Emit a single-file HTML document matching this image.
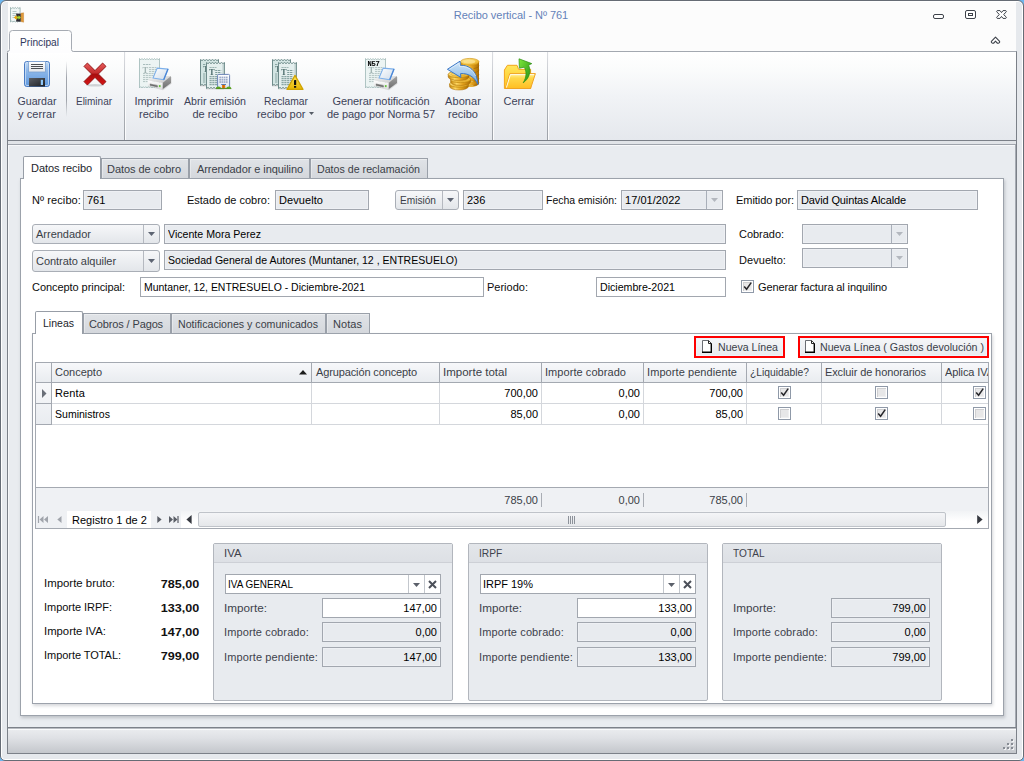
<!DOCTYPE html>
<html lang="es"><head><meta charset="utf-8"><title>Recibo vertical - Nº 761</title>
<style>
html,body{margin:0;padding:0}
body{width:1024px;height:761px;overflow:hidden;background:#6db6ef;position:relative;font-family:"Liberation Sans", sans-serif;font-size:11px;line-height:14px}
div{position:absolute;box-sizing:border-box}
svg{position:absolute;overflow:visible}
.t{position:absolute;white-space:nowrap;font-size:11px;line-height:14px}

.f{border:1px solid #a2a7af;background:#e8ebef;box-shadow:inset 0 0 0 1px #eef0f4}
.fw{border:1px solid #a2a7af;background:#fff}
.btn{border:1px solid #a9aeb6;border-radius:3px;background:linear-gradient(#f6f7f9,#e3e6ea)}
.tabi{border:1px solid #9aa0a9;border-bottom:none;background:linear-gradient(#e0e3e7,#d4d7dc);box-shadow:inset 1px 1px 0 rgba(255,255,255,.35)}
.taba{border:1px solid #979da6;border-bottom:none;background:#fff}
.page{border:1px solid #9ca2ab;background:#fff}
.gb{border:1px solid #b2b6bd;border-radius:2px;background:#e8ebef}
.gbh{background:linear-gradient(#e3e6ea,#dde0e5);border-bottom:1px solid #cdd0d6}
.cb{border:1px solid #8f99a8;background:#fff}
.cb i{position:absolute;left:1px;top:1px;width:9px;height:9px;background:#e7e7e8;box-shadow:inset 1px 1px 0 #cfcfd1,inset -1px -1px 0 #efeff0}
</style></head>
<body>
<div style="left:0px;top:0px;width:1024px;height:761px;border:1px solid #666c75;border-radius:6px 6px 5px 5px;background:#e6e9ed;box-shadow:inset 0 0 0 1px #fff"></div><div style="left:8px;top:2px;width:1008px;height:49px;background:#fcfcfc"></div><svg style="left:10px;top:7px" width="14" height="16"><path d="M.5 .5l1.2 1 1.2-1 1.2 1 1.2-1 1.2 1 1.2-1 1.2 1 1.2-1V15l-1.2-.9-1.2.9-1.2-.9-1.2.9-1.2-.9-1.2.9-1.2-.9-1.2.9Z" fill="#eef5f4" stroke="#8ea8a7" stroke-width=".8"/><path d="M2.5 4.5h4M2.5 6.5h5M2.5 8.5h4M2.5 10.5h3" stroke="#a9bfbe" stroke-width=".9"/><rect x="6.2" y="6.6" width="4.6" height="8" fill="#2e2a33"/><path d="M11 6.2l2.6-.4v9.4L11 14.6Z" fill="#e09a3c" stroke="#b87420" stroke-width=".4"/><path d="M4 10.5l2.6-2.3v1.4h2v-1.4l2.4 2.3-2.4 2.3v-1.4h-2v1.4Z" fill="#a4d82c"/><path d="M4 10.5l2.6-2.3v4.6Z" fill="#f59a10"/></svg><span class="t" style="top:8px;color:#6482b9;letter-spacing:-0.037px;left:361px;width:300px;text-align:center;">Recibo vertical - Nº 761</span><svg style="left:933px;top:14px" width="11" height="5"><rect x=".5" y=".5" width="10" height="4" rx="1.5" fill="#fff" stroke="#3d424a"/></svg><svg style="left:965px;top:10px" width="11" height="9"><rect x=".5" y=".5" width="10" height="8" rx="1.5" fill="#fff" stroke="#3d424a"/><rect x="3.5" y="3.5" width="4" height="2" fill="none" stroke="#3d424a"/></svg><svg style="left:996px;top:10px" width="11" height="9"><path d="M1.2 .6H4L5.5 2.6 7 .6H9.8Q10.9 1.2 10 2.2L7.6 4.5 10 6.8Q10.9 7.8 9.8 8.4H7L5.5 6.4 4 8.4H1.2Q.1 7.8 1 6.8L3.4 4.5 1 2.2Q.1 1.2 1.2 .6Z" fill="#fff" stroke="#3d424a" stroke-linejoin="round"/></svg><svg style="left:990px;top:36px" width="11" height="9"><path d="M5.5 1.2L9.6 5.4Q10 6.8 8.4 7.2 7.4 7.4 6.8 6.6L5.5 5.2 4.2 6.6Q3.6 7.4 2.6 7.2 1 6.8 1.4 5.4Z" fill="#fff" stroke="#3d424a" stroke-width="1.1" stroke-linejoin="round"/></svg><div style="left:7px;top:51px;width:1010px;height:703px;border:1px solid #7b8088;border-top-color:#a3a8b0;background:#e9ecf0"></div><div style="left:8px;top:52px;width:1008px;height:88px;background:linear-gradient(#ffffff,#fbfcfc 18%,#f1f3f6 50%,#e5e8ed)"></div><div style="left:8px;top:140px;width:1008px;height:1px;background:#7b8088"></div><div style="left:8px;top:141px;width:1008px;height:3px;background:#e1e4e8"></div><div style="left:8px;top:144px;width:1008px;height:1px;background:#a0a5ad"></div><div style="left:8px;top:145px;width:1008px;height:1px;background:#f7f8fa"></div><div style="left:8px;top:145px;width:1px;height:582px;background:#f7f8fa"></div><div style="left:1015px;top:145px;width:1px;height:582px;background:#a6abb3"></div><svg style="left:6px;top:30px" width="70" height="23"><defs><linearGradient id="ptab" x1="0" y1="0" x2="0" y2="1"><stop offset="0" stop-color="#fefefe"/><stop offset="1" stop-color="#fdfdfe"/></linearGradient></defs><path d="M1.5 21.5Q3.5 21.5 3.5 19.5V3.5Q3.5 .5 6.5 .5H62.5Q65.5 .5 65.5 3.5V19.5Q65.5 21.5 67.5 21.5V23H1.5Z" fill="url(#ptab)"/><path d="M1.5 21.5Q3.5 21.5 3.5 19.5V3.5Q3.5 .5 6.5 .5H62.5Q65.5 .5 65.5 3.5V19.5Q65.5 21.5 67.5 21.5" fill="none" stroke="#a6abb3"/></svg><span class="t" style="top:35px;color:#30375c;transform:scaleX(0.9244);transform-origin:0 0;left:20px;">Principal</span><div style="left:124px;top:52px;width:1px;height:88px;background:linear-gradient(#dcdee2,#b4b8be 50%,#9da1a8)"></div><div style="left:125px;top:52px;width:1px;height:88px;background:#fbfbfc"></div><div style="left:492px;top:52px;width:1px;height:88px;background:linear-gradient(#dcdee2,#b4b8be 50%,#9da1a8)"></div><div style="left:493px;top:52px;width:1px;height:88px;background:#fbfbfc"></div><div style="left:547px;top:52px;width:1px;height:88px;background:linear-gradient(#dcdee2,#b4b8be 50%,#9da1a8)"></div><div style="left:548px;top:52px;width:1px;height:88px;background:#fbfbfc"></div><div style="left:66px;top:61px;width:1px;height:56px;background:linear-gradient(rgba(160,164,171,0),#a0a4ab 30%,#a0a4ab 70%,rgba(160,164,171,0))"></div><span class="t" style="top:94px;color:#3c4258;transform:scaleX(0.9663);transform-origin:50% 0;left:-113px;width:300px;text-align:center;">Guardar</span><span class="t" style="top:107px;color:#3c4258;letter-spacing:0.090px;left:-113px;width:300px;text-align:center;">y cerrar</span><span class="t" style="top:94px;color:#3c4258;transform:scaleX(0.9060);transform-origin:50% 0;left:-56px;width:300px;text-align:center;">Eliminar</span><span class="t" style="top:94px;color:#3c4258;letter-spacing:-0.090px;left:4px;width:300px;text-align:center;">Imprimir</span><span class="t" style="top:107px;color:#3c4258;letter-spacing:0.005px;left:4px;width:300px;text-align:center;">recibo</span><span class="t" style="top:94px;color:#3c4258;transform:scaleX(0.9659);transform-origin:50% 0;left:65px;width:300px;text-align:center;">Abrir emisión</span><span class="t" style="top:107px;color:#3c4258;letter-spacing:-0.030px;left:65px;width:300px;text-align:center;">de recibo</span><span class="t" style="top:94px;color:#3c4258;transform:scaleX(0.9346);transform-origin:50% 0;left:136px;width:300px;text-align:center;">Reclamar</span><span class="t" style="top:107px;color:#3c4258;letter-spacing:-0.062px;left:257px;">recibo por</span><span class="t" style="top:94px;color:#3c4258;letter-spacing:-0.073px;left:231px;width:300px;text-align:center;">Generar notificación</span><span class="t" style="top:107px;color:#3c4258;letter-spacing:-0.104px;left:231px;width:300px;text-align:center;">de pago por Norma 57</span><span class="t" style="top:94px;color:#3c4258;letter-spacing:0.086px;left:313px;width:300px;text-align:center;">Abonar</span><span class="t" style="top:107px;color:#3c4258;letter-spacing:0.005px;left:313px;width:300px;text-align:center;">recibo</span><span class="t" style="top:94px;color:#3c4258;letter-spacing:-0.029px;left:369px;width:300px;text-align:center;">Cerrar</span><svg style="left:24px;top:61px;will-change:transform" width="26" height="26" viewBox="0 0 26 26"><defs><linearGradient id="svb" x1="0" y1="0" x2="0" y2="1"><stop offset="0" stop-color="#c3dbf5"/><stop offset=".35" stop-color="#8fb9ea"/><stop offset="1" stop-color="#5e97dc"/></linearGradient><linearGradient id="svl" x1="0" y1="0" x2="0" y2="1"><stop offset="0" stop-color="#ffffff"/><stop offset="1" stop-color="#e3e6ea"/></linearGradient><linearGradient id="svs" x1="0" y1="0" x2="1" y2="1"><stop offset="0" stop-color="#5b5f66"/><stop offset="1" stop-color="#1d1f22"/></linearGradient></defs><rect x=".5" y=".5" width="25" height="25" rx="2.2" fill="url(#svb)" stroke="#4a7cc4"/><rect x="1.5" y="1.5" width="23" height="23" rx="1.4" fill="none" stroke="#d4e6f8" stroke-opacity=".7"/><rect x="4.5" y=".5" width="17" height="10.5" fill="url(#svl)" stroke="#7ba0d0" stroke-width=".8"/><path d="M7 3.5h12M7 5.5h12M7 7.5h12" stroke="#3b3e44" stroke-width=".9"/><rect x="5" y="17" width="16" height="8.5" fill="url(#svs)"/><rect x="16.8" y="18.8" width="2.2" height="5.2" fill="#8ec6f7"/></svg><svg style="left:84px;top:63px;will-change:transform" width="22" height="24" viewBox="0 0 22 24"><defs><linearGradient id="dlg" x1="0" y1="0" x2="0" y2="1"><stop offset="0" stop-color="#e85a5a"/><stop offset=".46" stop-color="#c22e2e"/><stop offset=".5" stop-color="#a60f0f"/><stop offset="1" stop-color="#d81313"/></linearGradient></defs><ellipse cx="11" cy="22.3" rx="9" ry="1.2" fill="#8a8e96" opacity=".35"/><path d="M3.4 0L11 7.6L18.6 0L22 3.4L14.4 11L22 18.6L18.6 22L11 14.4L3.4 22L0 18.6L7.6 11L0 3.4Z" fill="url(#dlg)" stroke="#8c1010" stroke-width=".9" stroke-linejoin="round"/></svg><svg style="left:130px;top:54px;will-change:transform" width="48" height="40" viewBox="0 0 48 40"><defs><linearGradient id="pat" x1="0" y1="0" x2="1" y2="1"><stop offset="0" stop-color="#f6f6f6"/><stop offset="1" stop-color="#c6c6c6"/></linearGradient><linearGradient id="paf" x1="0" y1="0" x2="0" y2="1"><stop offset="0" stop-color="#ffffff"/><stop offset="1" stop-color="#dcdcdc"/></linearGradient><linearGradient id="pas" x1="0" y1="0" x2="0" y2="1"><stop offset="0" stop-color="#a4a4a4"/><stop offset="1" stop-color="#6c6c6c"/></linearGradient><linearGradient id="pap" x1="0" y1="0" x2="1" y2="1"><stop offset="0" stop-color="#ffffff"/><stop offset="1" stop-color="#cfdcea"/></linearGradient></defs><path d="M9.5 4.5L10.75 5.90L12.00 4.50L13.25 5.90L14.50 4.50L15.75 5.90L17.00 4.50L18.25 5.90L19.50 4.50L20.75 5.90L22.00 4.50L23.25 5.90L24.50 4.50L25.75 5.90L27.00 4.50L28.25 5.90L29.50 4.50L29.5 34.0L28.25 32.60L27.00 34.00L25.75 32.60L24.50 34.00L23.25 32.60L22.00 34.00L20.75 32.60L19.50 34.00L18.25 32.60L17.00 34.00L15.75 32.60L14.50 34.00L13.25 32.60L12.00 34.00L10.75 32.60L9.50 34.00Z" fill="#ecf4f3" stroke="#a3bab9" stroke-width="0.85" stroke-linejoin="round"/><path d="M13 10.5h7.5" stroke="#a9bdbc" stroke-width="1" stroke-dasharray="2.2 0.6" opacity="1"/><text x="12.4" y="18.6" font-family="Liberation Serif, serif" font-weight="bold" font-size="8.6" fill="#a3b5b4">T</text><path d="M19 13.6h7.5" stroke="#b2c4c3" stroke-width="1" stroke-dasharray="2.2 0.6" opacity="1"/><path d="M19 15.6h7.5" stroke="#b2c4c3" stroke-width="1" stroke-dasharray="2.2 0.6" opacity="1"/><path d="M19 17.6h7.5" stroke="#b2c4c3" stroke-width="1" stroke-dasharray="2.2 0.6" opacity="1"/><path d="M13 19.6h12" stroke="#b2c4c3" stroke-width="1" stroke-dasharray="2.2 0.6" opacity="1"/><path d="M13 21.6h12" stroke="#b2c4c3" stroke-width="1" stroke-dasharray="2.2 0.6" opacity="1"/><path d="M13 23.6h12" stroke="#b2c4c3" stroke-width="1" stroke-dasharray="2.2 0.6" opacity="1"/><path d="M13 25.6h12" stroke="#b2c4c3" stroke-width="1" stroke-dasharray="2.2 0.6" opacity="1"/><path d="M13 27.6h12" stroke="#b2c4c3" stroke-width="1" stroke-dasharray="2.2 0.6" opacity="1"/><path d="M17.5 26.3L23.5 22.3 41 22 41 28.9 32.5 35.3 17.9 31.6Z" fill="#777" opacity=".22" transform="translate(.5 .9)"/><path d="M17.5 26.3L23.5 22.3 41 22 32.5 28.9Z" fill="url(#pat)"/><path d="M32.5 28.9L41 22 41 28.9 32.5 35.3Z" fill="url(#pas)"/><path d="M17.5 26.3L32.5 28.9 32.5 35.3 17.9 31.6Z" fill="url(#paf)"/><path d="M19.9 29.4L27.6 31 27.6 33.6 19.9 31.8Z" fill="#9a9a9a"/><path d="M19.9 30.7L27.6 32.4" stroke="#5a5a5a" stroke-width=".8"/><rect x="28.9" y="31.1" width="1.7" height="2" fill="#66c43e"/><path d="M27.2 14.1L38 15.1 33.7 25.7 23 24Z" fill="url(#pap)" stroke="#7db0ea" stroke-width="1.1" stroke-linejoin="round"/><path d="M38 15.1L33.7 25.7" stroke="#4a86d6" stroke-width="1.3"/></svg><svg style="left:192px;top:54px;will-change:transform" width="48" height="40" viewBox="0 0 48 40"><defs><linearGradient id="bld" x1="0" y1="0" x2="0" y2="1"><stop offset="0" stop-color="#ffffff"/><stop offset="1" stop-color="#d9e4f6"/></linearGradient></defs><path d="M8.5 5.5L10.00 6.60L11.50 5.50L13.00 6.60L14.50 5.50L16.00 6.60L17.50 5.50L19.00 6.60L20.50 5.50L22.00 6.60L23.50 5.50L25.00 6.60L26.50 5.50L26.5 31.5L25.00 30.40L23.50 31.50L22.00 30.40L20.50 31.50L19.00 30.40L17.50 31.50L16.00 30.40L14.50 31.50L13.00 30.40L11.50 31.50L10.00 30.40L8.50 31.50Z" fill="#d3e5e3" stroke="#6f8c8b" stroke-width="1" stroke-linejoin="round"/><text x="11" y="17.5" font-family="Liberation Serif, serif" font-weight="bold" font-size="8" fill="#5f7c7b">T</text><path d="M11 10.5h6" stroke="#8aa6a4" stroke-width="1" stroke-dasharray="2.2 0.6" opacity="1"/><path d="M11 20h6" stroke="#8aa6a4" stroke-width="1" stroke-dasharray="2.2 0.6" opacity="1"/><path d="M11 22h6" stroke="#8aa6a4" stroke-width="1" stroke-dasharray="2.2 0.6" opacity="1"/><path d="M11 24h6" stroke="#8aa6a4" stroke-width="1" stroke-dasharray="2.2 0.6" opacity="1"/><path d="M11 26h6" stroke="#8aa6a4" stroke-width="1" stroke-dasharray="2.2 0.6" opacity="1"/><path d="M11 28h6" stroke="#8aa6a4" stroke-width="1" stroke-dasharray="2.2 0.6" opacity="1"/><path d="M14 34.8h18" stroke="#777" stroke-width="1" opacity=".35"/><path d="M8 31.8h7" stroke="#777" stroke-width="1" opacity=".35"/><path d="M14.5 8.5L16.00 9.60L17.50 8.50L19.00 9.60L20.50 8.50L22.00 9.60L23.50 8.50L25.00 9.60L26.50 8.50L28.00 9.60L29.50 8.50L31.00 9.60L32.50 8.50L32.5 34.5L31.00 33.40L29.50 34.50L28.00 33.40L26.50 34.50L25.00 33.40L23.50 34.50L22.00 33.40L20.50 34.50L19.00 33.40L17.50 34.50L16.00 33.40L14.50 34.50Z" fill="#e4efee" stroke="#6f8c8b" stroke-width="1" stroke-linejoin="round"/><rect x="30.5" y="10" width="2" height="24" fill="#9fb5b4" opacity=".55"/><path d="M17.5 13.5h7" stroke="#9db6b4" stroke-width="1" stroke-dasharray="2.2 0.6" opacity="1"/><text x="17" y="21.4" font-family="Liberation Serif, serif" font-weight="bold" font-size="8.5" fill="#4f6f6e">T</text><path d="M23.2 16.5h6" stroke="#7f9e9c" stroke-width="1.2" stroke-dasharray="2.2 0.6" opacity="1"/><path d="M23.2 18.5h6" stroke="#7f9e9c" stroke-width="1.2" stroke-dasharray="2.2 0.6" opacity="1"/><path d="M23.2 20.5h6" stroke="#7f9e9c" stroke-width="1.2" stroke-dasharray="2.2 0.6" opacity="1"/><path d="M17.5 22.6h11.5" stroke="#8aa6a4" stroke-width="1.2" stroke-dasharray="2.2 0.6" opacity="1"/><path d="M17.5 24.6h11.5" stroke="#8aa6a4" stroke-width="1.2" stroke-dasharray="2.2 0.6" opacity="1"/><path d="M17.5 26.6h11.5" stroke="#8aa6a4" stroke-width="1.2" stroke-dasharray="2.2 0.6" opacity="1"/><path d="M17.5 28.6h11.5" stroke="#8aa6a4" stroke-width="1.2" stroke-dasharray="2.2 0.6" opacity="1"/><path d="M17.5 30.6h11.5" stroke="#8aa6a4" stroke-width="1.2" stroke-dasharray="2.2 0.6" opacity="1"/><rect x="25.6" y="20.4" width="12" height="14" rx="1" fill="url(#bld)" stroke="#6c84b8" stroke-width="1"/><rect x="27.3" y="22.6" width="1.7" height="1.7" fill="#9eabc9"/><rect x="29.5" y="22.6" width="1.7" height="1.7" fill="#9eabc9"/><rect x="31.700000000000003" y="22.6" width="1.7" height="1.7" fill="#9eabc9"/><rect x="33.9" y="22.6" width="1.7" height="1.7" fill="#9eabc9"/><rect x="27.3" y="24.900000000000002" width="1.7" height="1.7" fill="#9eabc9"/><rect x="29.5" y="24.900000000000002" width="1.7" height="1.7" fill="#9eabc9"/><rect x="31.700000000000003" y="24.900000000000002" width="1.7" height="1.7" fill="#9eabc9"/><rect x="33.9" y="24.900000000000002" width="1.7" height="1.7" fill="#9eabc9"/><rect x="27.3" y="27.200000000000003" width="1.7" height="1.7" fill="#9eabc9"/><rect x="29.5" y="27.200000000000003" width="1.7" height="1.7" fill="#9eabc9"/><rect x="31.700000000000003" y="27.200000000000003" width="1.7" height="1.7" fill="#9eabc9"/><rect x="33.9" y="27.200000000000003" width="1.7" height="1.7" fill="#9eabc9"/><rect x="29.2" y="30" width="4.8" height="1" fill="#5d78b0"/><rect x="30" y="31" width="3.2" height="3.4" fill="#e67c12"/><path d="M31.6 31v3.4" stroke="#b85a00" stroke-width=".6"/><path d="M24 34.8c0-3 5-3 5 0Z" fill="#5da91d"/><path d="M34.3 34.8c0-3 5-3 5 0Z" fill="#5da91d"/><path d="M24 34.6h15.3" stroke="#4a8a14" stroke-width=".8"/></svg><svg style="left:262px;top:54px;will-change:transform" width="48" height="40" viewBox="0 0 48 40"><defs><linearGradient id="wrn" x1="0" y1="0" x2="0" y2="1"><stop offset="0" stop-color="#fbe55a"/><stop offset="1" stop-color="#e6b400"/></linearGradient></defs><path d="M10.5 5.5L12.00 6.60L13.50 5.50L15.00 6.60L16.50 5.50L18.00 6.60L19.50 5.50L21.00 6.60L22.50 5.50L24.00 6.60L25.50 5.50L27.00 6.60L28.50 5.50L28.5 31.5L27.00 30.40L25.50 31.50L24.00 30.40L22.50 31.50L21.00 30.40L19.50 31.50L18.00 30.40L16.50 31.50L15.00 30.40L13.50 31.50L12.00 30.40L10.50 31.50Z" fill="#d3e5e3" stroke="#6f8c8b" stroke-width="1" stroke-linejoin="round"/><text x="13" y="17.5" font-family="Liberation Serif, serif" font-weight="bold" font-size="8" fill="#5f7c7b">T</text><path d="M13 10.5h6" stroke="#8aa6a4" stroke-width="1" stroke-dasharray="2.2 0.6" opacity="1"/><path d="M13 20h6" stroke="#8aa6a4" stroke-width="1" stroke-dasharray="2.2 0.6" opacity="1"/><path d="M13 22h6" stroke="#8aa6a4" stroke-width="1" stroke-dasharray="2.2 0.6" opacity="1"/><path d="M13 24h6" stroke="#8aa6a4" stroke-width="1" stroke-dasharray="2.2 0.6" opacity="1"/><path d="M13 26h6" stroke="#8aa6a4" stroke-width="1" stroke-dasharray="2.2 0.6" opacity="1"/><path d="M13 28h6" stroke="#8aa6a4" stroke-width="1" stroke-dasharray="2.2 0.6" opacity="1"/><path d="M16 34.8h18" stroke="#777" stroke-width="1" opacity=".35"/><path d="M10 31.8h7" stroke="#777" stroke-width="1" opacity=".35"/><path d="M16.5 8.5L18.00 9.60L19.50 8.50L21.00 9.60L22.50 8.50L24.00 9.60L25.50 8.50L27.00 9.60L28.50 8.50L30.00 9.60L31.50 8.50L33.00 9.60L34.50 8.50L34.5 34.5L33.00 33.40L31.50 34.50L30.00 33.40L28.50 34.50L27.00 33.40L25.50 34.50L24.00 33.40L22.50 34.50L21.00 33.40L19.50 34.50L18.00 33.40L16.50 34.50Z" fill="#e4efee" stroke="#6f8c8b" stroke-width="1" stroke-linejoin="round"/><rect x="32.5" y="10" width="2" height="24" fill="#9fb5b4" opacity=".55"/><path d="M19.5 13.5h7" stroke="#9db6b4" stroke-width="1" stroke-dasharray="2.2 0.6" opacity="1"/><text x="19" y="21.4" font-family="Liberation Serif, serif" font-weight="bold" font-size="8.5" fill="#4f6f6e">T</text><path d="M25.2 16.5h6" stroke="#7f9e9c" stroke-width="1.2" stroke-dasharray="2.2 0.6" opacity="1"/><path d="M25.2 18.5h6" stroke="#7f9e9c" stroke-width="1.2" stroke-dasharray="2.2 0.6" opacity="1"/><path d="M25.2 20.5h6" stroke="#7f9e9c" stroke-width="1.2" stroke-dasharray="2.2 0.6" opacity="1"/><path d="M19.5 22.6h11.5" stroke="#8aa6a4" stroke-width="1.2" stroke-dasharray="2.2 0.6" opacity="1"/><path d="M19.5 24.6h11.5" stroke="#8aa6a4" stroke-width="1.2" stroke-dasharray="2.2 0.6" opacity="1"/><path d="M19.5 26.6h11.5" stroke="#8aa6a4" stroke-width="1.2" stroke-dasharray="2.2 0.6" opacity="1"/><path d="M19.5 28.6h11.5" stroke="#8aa6a4" stroke-width="1.2" stroke-dasharray="2.2 0.6" opacity="1"/><path d="M19.5 30.6h11.5" stroke="#8aa6a4" stroke-width="1.2" stroke-dasharray="2.2 0.6" opacity="1"/><path d="M33 21.4L41 35.4H25Z" fill="url(#wrn)" stroke="#cfa300" stroke-width="1.2" stroke-linejoin="round"/><rect x="32" y="26" width="2.2" height="5" rx=".4" fill="#111"/><rect x="32" y="32" width="2.2" height="1.8" rx=".3" fill="#111"/></svg><svg style="left:356px;top:54px;will-change:transform" width="48" height="40" viewBox="0 0 48 40"><defs><linearGradient id="pbt" x1="0" y1="0" x2="1" y2="1"><stop offset="0" stop-color="#f6f6f6"/><stop offset="1" stop-color="#c6c6c6"/></linearGradient><linearGradient id="pbf" x1="0" y1="0" x2="0" y2="1"><stop offset="0" stop-color="#ffffff"/><stop offset="1" stop-color="#dcdcdc"/></linearGradient><linearGradient id="pbs" x1="0" y1="0" x2="0" y2="1"><stop offset="0" stop-color="#a4a4a4"/><stop offset="1" stop-color="#6c6c6c"/></linearGradient><linearGradient id="pbp" x1="0" y1="0" x2="1" y2="1"><stop offset="0" stop-color="#ffffff"/><stop offset="1" stop-color="#cfdcea"/></linearGradient></defs><path d="M9.5 4.5L10.75 5.90L12.00 4.50L13.25 5.90L14.50 4.50L15.75 5.90L17.00 4.50L18.25 5.90L19.50 4.50L20.75 5.90L22.00 4.50L23.25 5.90L24.50 4.50L25.75 5.90L27.00 4.50L28.25 5.90L29.50 4.50L29.5 34.0L28.25 32.60L27.00 34.00L25.75 32.60L24.50 34.00L23.25 32.60L22.00 34.00L20.75 32.60L19.50 34.00L18.25 32.60L17.00 34.00L15.75 32.60L14.50 34.00L13.25 32.60L12.00 34.00L10.75 32.60L9.50 34.00Z" fill="#ecf4f3" stroke="#a3bab9" stroke-width="0.85" stroke-linejoin="round"/><text x="11.6" y="11.9" font-family="Liberation Mono, monospace" font-weight="bold" font-size="7.2" letter-spacing="-.3" fill="#000">N57</text><text x="12.4" y="18.6" font-family="Liberation Serif, serif" font-weight="bold" font-size="8.6" fill="#a3b5b4">T</text><path d="M19 13.6h7.5" stroke="#b2c4c3" stroke-width="1" stroke-dasharray="2.2 0.6" opacity="1"/><path d="M19 15.6h7.5" stroke="#b2c4c3" stroke-width="1" stroke-dasharray="2.2 0.6" opacity="1"/><path d="M19 17.6h7.5" stroke="#b2c4c3" stroke-width="1" stroke-dasharray="2.2 0.6" opacity="1"/><path d="M13 19.6h12" stroke="#b2c4c3" stroke-width="1" stroke-dasharray="2.2 0.6" opacity="1"/><path d="M13 21.6h12" stroke="#b2c4c3" stroke-width="1" stroke-dasharray="2.2 0.6" opacity="1"/><path d="M13 23.6h12" stroke="#b2c4c3" stroke-width="1" stroke-dasharray="2.2 0.6" opacity="1"/><path d="M13 25.6h12" stroke="#b2c4c3" stroke-width="1" stroke-dasharray="2.2 0.6" opacity="1"/><path d="M13 27.6h12" stroke="#b2c4c3" stroke-width="1" stroke-dasharray="2.2 0.6" opacity="1"/><path d="M17.5 26.3L23.5 22.3 41 22 41 28.9 32.5 35.3 17.9 31.6Z" fill="#777" opacity=".22" transform="translate(.5 .9)"/><path d="M17.5 26.3L23.5 22.3 41 22 32.5 28.9Z" fill="url(#pbt)"/><path d="M32.5 28.9L41 22 41 28.9 32.5 35.3Z" fill="url(#pbs)"/><path d="M17.5 26.3L32.5 28.9 32.5 35.3 17.9 31.6Z" fill="url(#pbf)"/><path d="M19.9 29.4L27.6 31 27.6 33.6 19.9 31.8Z" fill="#9a9a9a"/><path d="M19.9 30.7L27.6 32.4" stroke="#5a5a5a" stroke-width=".8"/><rect x="28.9" y="31.1" width="1.7" height="2" fill="#66c43e"/><path d="M27.2 14.1L38 15.1 33.7 25.7 23 24Z" fill="url(#pbp)" stroke="#7db0ea" stroke-width="1.1" stroke-linejoin="round"/><path d="M38 15.1L33.7 25.7" stroke="#4a86d6" stroke-width="1.3"/></svg><svg style="left:438px;top:54px;will-change:transform" width="48" height="40" viewBox="0 0 48 40"><defs><linearGradient id="cn" x1="0" y1="0" x2="1" y2="0"><stop offset="0" stop-color="#c28208"/><stop offset=".3" stop-color="#ffd964"/><stop offset=".62" stop-color="#e2a11c"/><stop offset="1" stop-color="#a96c04"/></linearGradient><linearGradient id="ct" x1="0" y1="0" x2="1" y2="1"><stop offset="0" stop-color="#fdeaa0"/><stop offset=".6" stop-color="#f3c646"/><stop offset="1" stop-color="#dc9c18"/></linearGradient><linearGradient id="ar" x1="0" y1="0" x2="0" y2="1"><stop offset="0" stop-color="#d4e7f8"/><stop offset=".5" stop-color="#a5cbee"/><stop offset="1" stop-color="#6fa6de"/></linearGradient></defs><path d="M22.6 7.8V29.5a9.2 3.4 0 0 0 18.4 0V7.8Z" fill="url(#cn)"/><path d="M22.6 11.6a9.2 3.3 0 0 0 18.4 0" fill="none" stroke="#9a6204" stroke-width=".8" opacity=".75"/><path d="M23.4 12.6a9.2 3.3 0 0 0 12 2.2" fill="none" stroke="#ffe48a" stroke-width=".7" opacity=".8"/><path d="M22.6 15.8a9.2 3.3 0 0 0 18.4 0" fill="none" stroke="#9a6204" stroke-width=".8" opacity=".75"/><path d="M23.4 16.8a9.2 3.3 0 0 0 12 2.2" fill="none" stroke="#ffe48a" stroke-width=".7" opacity=".8"/><path d="M22.6 20a9.2 3.3 0 0 0 18.4 0" fill="none" stroke="#9a6204" stroke-width=".8" opacity=".75"/><path d="M23.4 21a9.2 3.3 0 0 0 12 2.2" fill="none" stroke="#ffe48a" stroke-width=".7" opacity=".8"/><path d="M22.6 24.2a9.2 3.3 0 0 0 18.4 0" fill="none" stroke="#9a6204" stroke-width=".8" opacity=".75"/><path d="M23.4 25.2a9.2 3.3 0 0 0 12 2.2" fill="none" stroke="#ffe48a" stroke-width=".7" opacity=".8"/><path d="M22.6 28.4a9.2 3.3 0 0 0 18.4 0" fill="none" stroke="#9a6204" stroke-width=".8" opacity=".75"/><path d="M23.4 29.4a9.2 3.3 0 0 0 12 2.2" fill="none" stroke="#ffe48a" stroke-width=".7" opacity=".8"/><ellipse cx="31.8" cy="7.8" rx="9.2" ry="3.4" fill="url(#ct)" stroke="#d49a18" stroke-width=".7"/><ellipse cx="31.4" cy="7.7" rx="6" ry="1.9" fill="#fbe7a0" opacity=".7"/><path d="M11.6 30.000000000000004v2.6a9.4 3.4 0 0 0 18.8 0v-2.6Z" fill="url(#cn)" stroke="#a66a06" stroke-width=".5"/><ellipse cx="21" cy="30.000000000000004" rx="9.4" ry="3.3" fill="url(#ct)" stroke="#c08810" stroke-width=".7"/><ellipse cx="20.6" cy="30.000000000000004" rx="6.2" ry="1.7" fill="none" stroke="#d9a024" stroke-width=".7" opacity=".8"/><path d="M12.600000000000001 25.400000000000002v2.6a10 3.4 0 0 0 20 0v-2.6Z" fill="url(#cn)" stroke="#a66a06" stroke-width=".5"/><ellipse cx="22.6" cy="25.400000000000002" rx="10" ry="3.3" fill="url(#ct)" stroke="#c08810" stroke-width=".7"/><ellipse cx="22.200000000000003" cy="25.400000000000002" rx="6.8" ry="1.7" fill="none" stroke="#d9a024" stroke-width=".7" opacity=".8"/><path d="M10.200000000000001 20.400000000000002v2.6a10.4 3.4 0 0 0 20.8 0v-2.6Z" fill="url(#cn)" stroke="#a66a06" stroke-width=".5"/><ellipse cx="20.6" cy="20.400000000000002" rx="10.4" ry="3.3" fill="url(#ct)" stroke="#c08810" stroke-width=".7"/><ellipse cx="20.200000000000003" cy="20.400000000000002" rx="7.2" ry="1.7" fill="none" stroke="#d9a024" stroke-width=".7" opacity=".8"/><path d="M9.4 15.3L22 7.2 22.4 11.4C31 11 38.6 16 40 30.4 36 22.4 30.4 19.2 22.6 19.6L22.8 23.4Z" fill="url(#ar)" stroke="#3a76c6" stroke-width="1" stroke-linejoin="round"/><path d="M11.6 15.2L21.2 9 21.6 12.3C29 12 35 15.4 37.6 22" fill="none" stroke="#eaf4fc" stroke-width=".8" opacity=".8"/></svg><svg style="left:494px;top:54px;will-change:transform" width="48" height="40" viewBox="0 0 48 40"><defs><linearGradient id="fb" x1="0" y1="0" x2="0" y2="1"><stop offset="0" stop-color="#ffe65c"/><stop offset="1" stop-color="#ffc21e"/></linearGradient><linearGradient id="ff" x1="0" y1="0" x2="0" y2="1"><stop offset="0" stop-color="#fff3a8"/><stop offset=".3" stop-color="#ffd84a"/><stop offset="1" stop-color="#ffbe22"/></linearGradient><linearGradient id="ga" x1="0" y1="0" x2="1" y2="1"><stop offset="0" stop-color="#7ee83c"/><stop offset="1" stop-color="#1e8a10"/></linearGradient></defs><path d="M10.4 16L13.4 11.3H23L24.6 15.4H36.6V34.5H10.4Z" fill="url(#fb)" stroke="#f3a51c" stroke-width="1" stroke-linejoin="round"/><path d="M15.8 19.6H41.4L36.6 34.5H11.4Z" fill="url(#ff)" stroke="#f0a324" stroke-width="1" stroke-linejoin="round"/><path d="M12.4 33.6L16.4 20.6H40" fill="none" stroke="#fffbe6" stroke-width="1"/><path d="M25 4.8L37.8 9.6 34.6 11.2C37.6 17 35.4 24.4 29.2 28.8 33 22.6 32.6 16.4 30 13.2L25.4 14.2Z" fill="url(#ga)" stroke="#2d8c14" stroke-width=".7" stroke-linejoin="round"/></svg><svg style="left:309.0px;top:112.0px" width="5" height="3"><path d="M0 0H5L2.5 3Z" fill="#555b65"/></svg><div style="left:7px;top:727px;width:1010px;height:27px;border:1px solid #7c8189;background:linear-gradient(#b9bcc2 0,#b9bcc2 1px,#fafbfc 1px,#fafbfc 2px,#e9ebee 2px,#dfe1e5 40%,#c4c7cc)"></div><div style="left:1011px;top:739px;width:2px;height:2px;background:#878c94;box-shadow:1px 1px 0 #f2f3f5"></div><div style="left:1007px;top:743px;width:2px;height:2px;background:#878c94;box-shadow:1px 1px 0 #f2f3f5"></div><div style="left:1011px;top:743px;width:2px;height:2px;background:#878c94;box-shadow:1px 1px 0 #f2f3f5"></div><div style="left:1003px;top:747px;width:2px;height:2px;background:#878c94;box-shadow:1px 1px 0 #f2f3f5"></div><div style="left:1007px;top:747px;width:2px;height:2px;background:#878c94;box-shadow:1px 1px 0 #f2f3f5"></div><div style="left:1011px;top:747px;width:2px;height:2px;background:#878c94;box-shadow:1px 1px 0 #f2f3f5"></div><div class="page" style="left:20px;top:178px;width:984px;height:538px;box-shadow:1px 2px 3px rgba(120,125,135,.38)"></div><div class="taba" style="left:23px;top:156px;width:78px;height:23px;border-radius:2px 2px 0 0"></div><div class="tabi" style="left:101px;top:158px;width:88px;height:20px;"></div><div class="tabi" style="left:189px;top:158px;width:121px;height:20px;"></div><div class="tabi" style="left:310px;top:158px;width:118px;height:20px;"></div><span class="t" style="top:161px;color:#22252b;letter-spacing:-0.064px;left:31px;">Datos recibo</span><span class="t" style="top:162px;color:#3a3e47;letter-spacing:-0.044px;left:107px;">Datos de cobro</span><span class="t" style="top:162px;color:#3a3e47;letter-spacing:-0.075px;left:197px;">Arrendador e inquilino</span><span class="t" style="top:162px;color:#3a3e47;transform:scaleX(0.9681);transform-origin:0 0;left:317px;">Datos de reclamación</span><span class="t" style="top:193px;color:#0c0c0c;letter-spacing:0.095px;left:32px;">Nº recibo:</span><div class="f" style="left:83px;top:190px;width:79px;height:20px;"></div><span class="t" style="top:193px;color:#000;left:87px;">761</span><span class="t" style="top:193px;color:#0c0c0c;letter-spacing:-0.011px;left:187px;">Estado de cobro:</span><div class="f" style="left:275px;top:190px;width:94px;height:20px;"></div><span class="t" style="top:193px;color:#000;letter-spacing:0.072px;left:279px;">Devuelto</span><div class="btn" style="left:395px;top:190px;width:64px;height:20px;"></div><div style="left:442px;top:191px;width:1px;height:18px;background:#b5b9c0"></div><span class="t" style="top:193px;color:#3a3e47;transform:scaleX(0.9201);transform-origin:0 0;left:400px;">Emisión</span><svg style="left:447.0px;top:198.0px" width="7" height="4"><path d="M0 0H7L3.5 4Z" fill="#5d6472"/></svg><div class="f" style="left:463px;top:190px;width:80px;height:20px;"></div><span class="t" style="top:193px;color:#000;left:467px;">236</span><span class="t" style="top:193px;color:#0c0c0c;transform:scaleX(0.9518);transform-origin:0 0;left:546px;">Fecha emisión:</span><div class="f" style="left:621px;top:190px;width:102px;height:20px;"></div><span class="t" style="top:193px;color:#000;letter-spacing:0.044px;left:625px;">17/01/2022</span><div style="left:706px;top:191px;width:1px;height:18px;background:#a9afb9"></div><svg style="left:711.0px;top:198.0px" width="7" height="4"><path d="M0 0H7L3.5 4Z" fill="#b3b7be"/></svg><span class="t" style="top:193px;color:#0c0c0c;letter-spacing:-0.059px;left:736px;">Emitido por:</span><div class="f" style="left:797px;top:190px;width:181px;height:20px;"></div><span class="t" style="top:193px;color:#000;letter-spacing:-0.125px;left:801px;">David Quintas Alcalde</span><div class="btn" style="left:32px;top:224px;width:128px;height:20px;"></div><div style="left:143px;top:225px;width:1px;height:18px;background:#b5b9c0"></div><span class="t" style="top:227px;color:#3a3e47;letter-spacing:-0.005px;left:36px;">Arrendador</span><svg style="left:148.0px;top:232.0px" width="7" height="4"><path d="M0 0H7L3.5 4Z" fill="#5d6472"/></svg><div class="f" style="left:164px;top:224px;width:562px;height:20px;"></div><span class="t" style="top:227px;color:#000;transform:scaleX(0.9647);transform-origin:0 0;left:168px;">Vicente Mora Perez</span><span class="t" style="top:227px;color:#0c0c0c;letter-spacing:-0.033px;left:739px;">Cobrado:</span><div class="f" style="left:802px;top:224px;width:106px;height:20px;"></div><div style="left:891px;top:225px;width:1px;height:18px;background:#a9afb9"></div><svg style="left:896.0px;top:232.0px" width="7" height="4"><path d="M0 0H7L3.5 4Z" fill="#b3b7be"/></svg><div class="btn" style="left:32px;top:250px;width:128px;height:22px;"></div><div style="left:143px;top:251px;width:1px;height:20px;background:#b5b9c0"></div><span class="t" style="top:254px;color:#3a3e47;letter-spacing:-0.042px;left:36px;">Contrato alquiler</span><svg style="left:148.0px;top:259.0px" width="7" height="4"><path d="M0 0H7L3.5 4Z" fill="#5d6472"/></svg><div class="f" style="left:164px;top:250px;width:562px;height:20px;"></div><span class="t" style="top:253px;color:#000;transform:scaleX(0.9585);transform-origin:0 0;left:168px;">Sociedad General de Autores (Muntaner, 12 , ENTRESUELO)</span><span class="t" style="top:253px;color:#0c0c0c;letter-spacing:0.057px;left:739px;">Devuelto:</span><div class="f" style="left:802px;top:248px;width:106px;height:20px;"></div><div style="left:891px;top:249px;width:1px;height:18px;background:#a9afb9"></div><svg style="left:896.0px;top:256.0px" width="7" height="4"><path d="M0 0H7L3.5 4Z" fill="#b3b7be"/></svg><span class="t" style="top:280px;color:#0c0c0c;letter-spacing:-0.062px;left:32px;">Concepto principal:</span><div class="fw" style="left:140px;top:277px;width:344px;height:20px;"></div><span class="t" style="top:280px;color:#000;transform:scaleX(0.9512);transform-origin:0 0;left:144px;">Muntaner, 12, ENTRESUELO - Diciembre-2021</span><span class="t" style="top:280px;color:#0c0c0c;left:487px;">Periodo:</span><div class="fw" style="left:596px;top:277px;width:130px;height:20px;"></div><span class="t" style="top:280px;color:#000;transform:scaleX(0.9658);transform-origin:0 0;left:600px;">Diciembre-2021</span><div class="cb" style="left:741px;top:280px;width:13px;height:13px;"><i></i><svg style="left:0;top:0" width="11" height="11"><path d="M2.2 5.4L4.6 8.2 9.2 1.6" fill="none" stroke="#26262a" stroke-width="1.5"/></svg></div><span class="t" style="top:280px;color:#0c0c0c;letter-spacing:-0.110px;left:758px;">Generar factura al inquilino</span><div class="page" style="left:32px;top:333px;width:960px;height:371px;box-shadow:1px 2px 3px rgba(120,125,135,.3)"></div><div class="taba" style="left:35px;top:311px;width:48px;height:23px;border-radius:2px 2px 0 0"></div><div class="tabi" style="left:83px;top:313px;width:88px;height:20px;"></div><div class="tabi" style="left:171px;top:313px;width:155px;height:20px;"></div><div class="tabi" style="left:326px;top:313px;width:44px;height:20px;"></div><span class="t" style="top:316px;color:#22252b;transform:scaleX(0.9561);transform-origin:0 0;left:43px;">Lineas</span><span class="t" style="top:317px;color:#3a3e47;letter-spacing:-0.131px;left:89px;">Cobros / Pagos</span><span class="t" style="top:317px;color:#3a3e47;transform:scaleX(0.9661);transform-origin:0 0;left:178px;">Notificaciones y comunicados</span><span class="t" style="top:317px;color:#3a3e47;letter-spacing:0.050px;left:333px;">Notas</span><div style="left:694px;top:336px;width:91px;height:22px;border:2px solid #fe0000;background:linear-gradient(#f5f6f8,#e8eaee);box-shadow:inset 0 0 0 1px #eaf4fa"></div><div style="left:798px;top:336px;width:191px;height:22px;border:2px solid #fe0000;background:linear-gradient(#f5f6f8,#e8eaee);box-shadow:inset 0 0 0 1px #eaf4fa"></div><span class="t" style="top:340px;color:#3a3e47;transform:scaleX(0.9617);transform-origin:0 0;left:718px;">Nueva Línea</span><span class="t" style="top:340px;color:#3a3e47;transform:scaleX(0.9683);transform-origin:0 0;left:820px;">Nueva Línea ( Gastos devolución )</span><svg style="left:702px;top:340px" width="10" height="13"><path d="M.5 .5H6.5L9.5 3.5V12.5H.5Z" fill="#fff"/><path d="M.5 12V.5H6.5" fill="none" stroke="#6a6d73" stroke-width="1"/><path d="M6.5 .5V3.5H9.5" fill="none" stroke="#222" stroke-width="1"/><path d="M6.5 .5L9.5 3.5" stroke="#444" stroke-width="1"/><path d="M9.3 3.5V12.3H0" fill="none" stroke="#000" stroke-width="1.4"/></svg><svg style="left:805px;top:340px" width="10" height="13"><path d="M.5 .5H6.5L9.5 3.5V12.5H.5Z" fill="#fff"/><path d="M.5 12V.5H6.5" fill="none" stroke="#6a6d73" stroke-width="1"/><path d="M6.5 .5V3.5H9.5" fill="none" stroke="#222" stroke-width="1"/><path d="M6.5 .5L9.5 3.5" stroke="#444" stroke-width="1"/><path d="M9.3 3.5V12.3H0" fill="none" stroke="#000" stroke-width="1.4"/></svg><div style="left:35px;top:362px;width:954px;height:167px;border:1px solid #a4a9b1;background:#fff"></div><div style="left:36px;top:363px;width:952px;height:20px;background:linear-gradient(#f7f8fa,#e9ecf0);border-bottom:1px solid #a4a9b1"></div><div style="left:51px;top:363px;width:1px;height:20px;background:#a4a9b1"></div><div style="left:51px;top:383px;width:1px;height:42px;background:#d4d7dc"></div><div style="left:311px;top:363px;width:1px;height:20px;background:#a4a9b1"></div><div style="left:311px;top:383px;width:1px;height:42px;background:#d4d7dc"></div><div style="left:439px;top:363px;width:1px;height:20px;background:#a4a9b1"></div><div style="left:439px;top:383px;width:1px;height:42px;background:#d4d7dc"></div><div style="left:541px;top:363px;width:1px;height:20px;background:#a4a9b1"></div><div style="left:541px;top:383px;width:1px;height:42px;background:#d4d7dc"></div><div style="left:643px;top:363px;width:1px;height:20px;background:#a4a9b1"></div><div style="left:643px;top:383px;width:1px;height:42px;background:#d4d7dc"></div><div style="left:746px;top:363px;width:1px;height:20px;background:#a4a9b1"></div><div style="left:746px;top:383px;width:1px;height:42px;background:#d4d7dc"></div><div style="left:821px;top:363px;width:1px;height:20px;background:#a4a9b1"></div><div style="left:821px;top:383px;width:1px;height:42px;background:#d4d7dc"></div><div style="left:941px;top:363px;width:1px;height:20px;background:#a4a9b1"></div><div style="left:941px;top:383px;width:1px;height:42px;background:#d4d7dc"></div><div style="left:36px;top:383px;width:16px;height:42px;background:linear-gradient(#f7f8fa,#e9ecf0)"></div><div style="left:51px;top:383px;width:1px;height:42px;background:#a4a9b1"></div><div style="left:36px;top:403px;width:952px;height:1px;background:#d4d7dc"></div><div style="left:36px;top:424px;width:952px;height:1px;background:#d4d7dc"></div><div style="left:36px;top:403px;width:16px;height:1px;background:#a4a9b1"></div><div style="left:36px;top:424px;width:16px;height:1px;background:#a4a9b1"></div><svg style="left:42px;top:389px" width="5" height="9"><path d="M0 0L4.5 4.5 0 9Z" fill="#6a6f78"/></svg><svg style="left:299px;top:370px" width="8" height="5"><path d="M0 4.5H8L4 0Z" fill="#1c1c1c"/></svg><span class="t" style="top:365px;color:#3a3e47;letter-spacing:-0.012px;left:55px;">Concepto</span><span class="t" style="top:365px;color:#3a3e47;letter-spacing:-0.124px;left:316px;">Agrupación concepto</span><span class="t" style="top:365px;color:#3a3e47;transform:scaleX(1.0468);transform-origin:0 0;left:443px;">Importe total</span><span class="t" style="top:365px;color:#3a3e47;letter-spacing:0.059px;left:545px;">Importe cobrado</span><span class="t" style="top:365px;color:#3a3e47;letter-spacing:0.078px;left:647px;">Importe pendiente</span><span class="t" style="top:365px;color:#3a3e47;transform:scaleX(0.9365);transform-origin:0 0;left:750px;">¿Liquidable?</span><span class="t" style="top:365px;color:#3a3e47;letter-spacing:-0.112px;left:825px;">Excluir de honorarios</span><div style="left:945px;top:363px;width:43px;height:20px;overflow:hidden"><span class="t" style="top:2px;color:#3a3e47;letter-spacing:-0.094px;left:0px;">Aplica IVA</span></div><span class="t" style="top:386px;color:#000;letter-spacing:0.128px;left:55px;">Renta</span><span class="t" style="top:407px;color:#000;transform:scaleX(0.9570);transform-origin:0 0;left:55px;">Suministros</span><span class="t" style="top:386px;color:#000;right:486.000px;">700,00</span><span class="t" style="top:386px;color:#000;right:384.000px;">0,00</span><span class="t" style="top:386px;color:#000;right:281.000px;">700,00</span><span class="t" style="top:407px;color:#000;right:486.000px;">85,00</span><span class="t" style="top:407px;color:#000;right:384.000px;">0,00</span><span class="t" style="top:407px;color:#000;right:281.000px;">85,00</span><div class="cb" style="left:778px;top:386px;width:13px;height:13px;"><i></i><svg style="left:0;top:0" width="11" height="11"><path d="M2.2 5.4L4.6 8.2 9.2 1.6" fill="none" stroke="#26262a" stroke-width="1.5"/></svg></div><div class="cb" style="left:875px;top:386px;width:13px;height:13px;"><i></i></div><div class="cb" style="left:973px;top:386px;width:13px;height:13px;"><i></i><svg style="left:0;top:0" width="11" height="11"><path d="M2.2 5.4L4.6 8.2 9.2 1.6" fill="none" stroke="#26262a" stroke-width="1.5"/></svg></div><div class="cb" style="left:778px;top:407px;width:13px;height:13px;"><i></i></div><div class="cb" style="left:875px;top:407px;width:13px;height:13px;"><i></i><svg style="left:0;top:0" width="11" height="11"><path d="M2.2 5.4L4.6 8.2 9.2 1.6" fill="none" stroke="#26262a" stroke-width="1.5"/></svg></div><div class="cb" style="left:973px;top:407px;width:13px;height:13px;"><i></i></div><div style="left:36px;top:487px;width:952px;height:24px;background:#eff1f4;border-top:1px solid #a4a9b1"></div><div style="left:541px;top:493px;width:1px;height:14px;background:#a9adb4"></div><div style="left:643px;top:493px;width:1px;height:14px;background:#a9adb4"></div><div style="left:746px;top:493px;width:1px;height:14px;background:#a9adb4"></div><span class="t" style="top:493px;color:#3a3e47;right:486.000px;">785,00</span><span class="t" style="top:493px;color:#3a3e47;right:384.000px;">0,00</span><span class="t" style="top:493px;color:#3a3e47;right:281.000px;">785,00</span><div style="left:36px;top:511px;width:952px;height:17px;background:linear-gradient(#f1f3f5,#fff 60%)"></div><div style="left:36px;top:511px;width:145px;height:17px;background:#eff1f4"></div><div style="left:67px;top:511px;width:84px;height:17px;background:#fff"></div><span class="t" style="top:513px;color:#000;letter-spacing:0.026px;left:72px;">Registro 1 de 2</span><svg style="left:38px;top:516px" width="11" height="7"><path d="M.5 0v7" stroke="#a0a4ab" stroke-width="1.2"/><path d="M5.5 0v7L1.5 3.5ZM10 0v7L6 3.5Z" fill="#a0a4ab"/></svg><svg style="left:57px;top:516px" width="5" height="7"><path d="M4.5 0v7L.3 3.5Z" fill="#a0a4ab"/></svg><svg style="left:157px;top:516px" width="5" height="7"><path d="M.3 0v7L4.6 3.5Z" fill="#5a5e66"/></svg><svg style="left:168px;top:516px" width="11" height="7"><path d="M10 0v7" stroke="#5a5e66" stroke-width="1.2"/><path d="M1 0v7L5 3.5ZM5.5 0v7L9.5 3.5Z" fill="#5a5e66"/></svg><svg style="left:186px;top:515px" width="6" height="9"><path d="M5.6 0v9L.4 4.5Z" fill="#35383f"/></svg><svg style="left:977px;top:515px" width="6" height="9"><path d="M.2 0v9L5.6 4.5Z" fill="#35383f"/></svg><div style="left:198px;top:512px;width:748px;height:15px;border:1px solid #bfc3c9;border-radius:2px;background:linear-gradient(#f4f5f7,#e5e7ea)"></div><div style="left:568px;top:516px;width:1px;height:8px;background:#8d929a"></div><div style="left:570px;top:516px;width:1px;height:8px;background:#8d929a"></div><div style="left:572px;top:516px;width:1px;height:8px;background:#8d929a"></div><div style="left:574px;top:516px;width:1px;height:8px;background:#8d929a"></div><span class="t" style="top:576px;color:#0c0c0c;transform:scaleX(1.0367);transform-origin:0 0;left:44px;">Importe bruto:</span><span class="t" style="top:577px;color:#111;font-size:11.5px;font-weight:bold;transform:scaleX(1.0941);transform-origin:100% 0;right:825.000px;">785,00</span><span class="t" style="top:600px;color:#0c0c0c;letter-spacing:-0.036px;left:44px;">Importe IRPF:</span><span class="t" style="top:601px;color:#111;font-size:11.5px;font-weight:bold;transform:scaleX(1.0941);transform-origin:100% 0;right:825.000px;">133,00</span><span class="t" style="top:624px;color:#0c0c0c;transform:scaleX(1.0277);transform-origin:0 0;left:44px;">Importe IVA:</span><span class="t" style="top:625px;color:#111;font-size:11.5px;font-weight:bold;transform:scaleX(1.0941);transform-origin:100% 0;right:825.000px;">147,00</span><span class="t" style="top:648px;color:#0c0c0c;letter-spacing:-0.046px;left:44px;">Importe TOTAL:</span><span class="t" style="top:649px;color:#111;font-size:11.5px;font-weight:bold;transform:scaleX(1.0941);transform-origin:100% 0;right:825.000px;">799,00</span><div class="gb" style="left:213px;top:543px;width:240px;height:158px;"></div><div class="gbh" style="left:214px;top:544px;width:238px;height:19px;"></div><span class="t" style="top:546px;color:#3e424c;transform:scaleX(1.0342);transform-origin:0 0;left:224px;">IVA</span><div class="fw" style="left:225px;top:574px;width:216px;height:20px;"></div><span class="t" style="top:577px;color:#000;transform:scaleX(0.9036);transform-origin:0 0;left:228px;">IVA GENERAL</span><div style="left:408px;top:575px;width:1px;height:18px;background:#c3c7cd"></div><div style="left:424px;top:575px;width:1px;height:18px;background:#c3c7cd"></div><svg style="left:413.0px;top:582.5px" width="7" height="4"><path d="M0 0H7L3.5 4Z" fill="#5b606a"/></svg><svg style="left:428px;top:580px" width="9" height="9"><path d="M1 1L8 8M8 1L1 8" stroke="#4c5059" stroke-width="2"/></svg><span class="t" style="top:601px;color:#3e424c;transform:scaleX(1.0654);transform-origin:0 0;left:224px;">Importe:</span><div class="fw" style="left:322px;top:598px;width:119px;height:20px;"></div><span class="t" style="top:601px;color:#000;right:587.000px;">147,00</span><span class="t" style="top:625px;color:#3e424c;letter-spacing:0.115px;left:224px;">Importe cobrado:</span><div class="f" style="left:322px;top:622px;width:119px;height:20px;"></div><span class="t" style="top:625px;color:#000;right:587.000px;">0,00</span><span class="t" style="top:650px;color:#3e424c;letter-spacing:0.126px;left:224px;">Importe pendiente:</span><div class="f" style="left:322px;top:647px;width:119px;height:20px;"></div><span class="t" style="top:650px;color:#000;right:587.000px;">147,00</span><div class="gb" style="left:468px;top:543px;width:240px;height:158px;"></div><div class="gbh" style="left:469px;top:544px;width:238px;height:19px;"></div><span class="t" style="top:546px;color:#3e424c;transform:scaleX(0.9297);transform-origin:0 0;left:479px;">IRPF</span><div class="fw" style="left:480px;top:574px;width:216px;height:20px;"></div><span class="t" style="top:577px;color:#000;letter-spacing:-0.018px;left:483px;">IRPF 19%</span><div style="left:663px;top:575px;width:1px;height:18px;background:#c3c7cd"></div><div style="left:679px;top:575px;width:1px;height:18px;background:#c3c7cd"></div><svg style="left:668.0px;top:582.5px" width="7" height="4"><path d="M0 0H7L3.5 4Z" fill="#5b606a"/></svg><svg style="left:683px;top:580px" width="9" height="9"><path d="M1 1L8 8M8 1L1 8" stroke="#4c5059" stroke-width="2"/></svg><span class="t" style="top:601px;color:#3e424c;transform:scaleX(1.0654);transform-origin:0 0;left:479px;">Importe:</span><div class="fw" style="left:577px;top:598px;width:119px;height:20px;"></div><span class="t" style="top:601px;color:#000;right:332.000px;">133,00</span><span class="t" style="top:625px;color:#3e424c;letter-spacing:0.115px;left:479px;">Importe cobrado:</span><div class="f" style="left:577px;top:622px;width:119px;height:20px;"></div><span class="t" style="top:625px;color:#000;right:332.000px;">0,00</span><span class="t" style="top:650px;color:#3e424c;letter-spacing:0.126px;left:479px;">Importe pendiente:</span><div class="f" style="left:577px;top:647px;width:119px;height:20px;"></div><span class="t" style="top:650px;color:#000;right:332.000px;">133,00</span><div class="gb" style="left:722px;top:543px;width:220px;height:158px;"></div><div class="gbh" style="left:723px;top:544px;width:218px;height:19px;"></div><span class="t" style="top:546px;color:#3e424c;transform:scaleX(0.9205);transform-origin:0 0;left:733px;">TOTAL</span><span class="t" style="top:601px;color:#3e424c;transform:scaleX(1.0654);transform-origin:0 0;left:733px;">Importe:</span><div class="f" style="left:831px;top:598px;width:99px;height:20px;"></div><span class="t" style="top:601px;color:#000;right:98.000px;">799,00</span><span class="t" style="top:625px;color:#3e424c;letter-spacing:0.115px;left:733px;">Importe cobrado:</span><div class="f" style="left:831px;top:622px;width:99px;height:20px;"></div><span class="t" style="top:625px;color:#000;right:98.000px;">0,00</span><span class="t" style="top:650px;color:#3e424c;letter-spacing:0.126px;left:733px;">Importe pendiente:</span><div class="f" style="left:831px;top:647px;width:99px;height:20px;"></div><span class="t" style="top:650px;color:#000;right:98.000px;">799,00</span>
</body></html>
